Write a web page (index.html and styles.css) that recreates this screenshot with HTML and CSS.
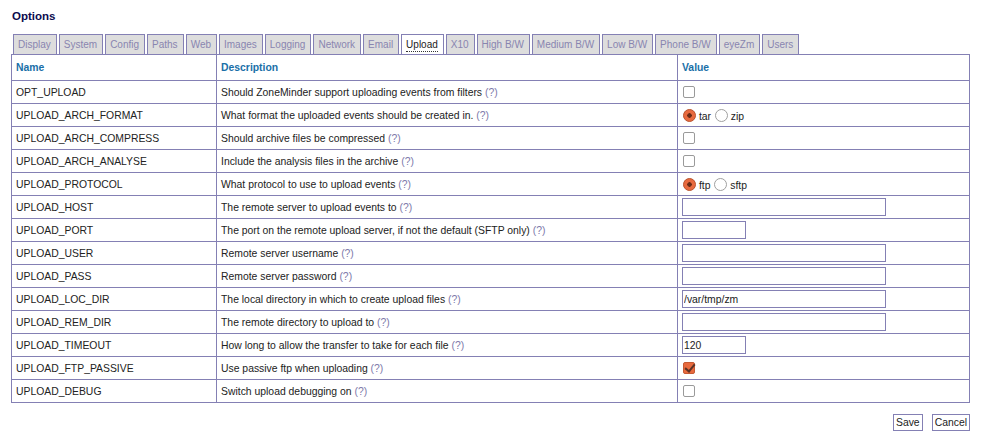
FILE: index.html
```html
<html lang="en">
<head>
    <meta charset="UTF-8">
    <meta name="viewport" content="width=device-width, initial-scale=1.0">
    <title>Options ---- ZoneMinder</title>
    <link rel="stylesheet" href="styles.css">
</head>
<body>
    <div id="page">
        <h2 class="title">Options</h2>
        <ul class="tabs">
            <li>Display</li>
            <li>System</li>
            <li>Config</li>
            <li>Paths</li>
            <li>Web</li>
            <li>Images</li>
            <li>Logging</li>
            <li>Network</li>
            <li>Email</li>
            <li class="active"><span>Upload</span></li>
            <li>X10</li>
            <li>High B/W</li>
            <li>Medium B/W</li>
            <li>Low B/W</li>
            <li>Phone B/W</li>
            <li>eyeZm</li>
            <li>Users</li>
        </ul>
        <form id="form_options">
        <table class="options">
            <thead>
                <tr>
                    <th class="col_name">Name</th>
                    <th class="col_desc">Description</th>
                    <th class="col_value">Value</th>
                </tr>
            </thead>
            <tbody>
                <tr>
                    <td>OPT_UPLOAD</td>
                    <td>Should ZoneMinder support uploading events from filters <a href="#">(?)</a></td>
                    <td><input type="checkbox" class="check"></td>
                </tr>
                <tr>
                    <td>UPLOAD_ARCH_FORMAT</td>
                    <td>What format the uploaded events should be created in. <a href="#">(?)</a></td>
                    <td><input type="radio" class="radio" name="arch" checked> tar <input type="radio" class="radio" name="arch"> zip</td>
                </tr>
                <tr>
                    <td>UPLOAD_ARCH_COMPRESS</td>
                    <td>Should archive files be compressed <a href="#">(?)</a></td>
                    <td><input type="checkbox" class="check"></td>
                </tr>
                <tr>
                    <td>UPLOAD_ARCH_ANALYSE</td>
                    <td>Include the analysis files in the archive <a href="#">(?)</a></td>
                    <td><input type="checkbox" class="check"></td>
                </tr>
                <tr>
                    <td>UPLOAD_PROTOCOL</td>
                    <td>What protocol to use to upload events <a href="#">(?)</a></td>
                    <td><input type="radio" class="radio" name="proto" checked> ftp <input type="radio" class="radio" name="proto"> sftp</td>
                </tr>
                <tr>
                    <td>UPLOAD_HOST</td>
                    <td>The remote server to upload events to <a href="#">(?)</a></td>
                    <td><input class="text wide"></td>
                </tr>
                <tr>
                    <td>UPLOAD_PORT</td>
                    <td>The port on the remote upload server, if not the default (SFTP only) <a href="#">(?)</a></td>
                    <td><input class="text short"></td>
                </tr>
                <tr>
                    <td>UPLOAD_USER</td>
                    <td>Remote server username <a href="#">(?)</a></td>
                    <td><input class="text wide"></td>
                </tr>
                <tr>
                    <td>UPLOAD_PASS</td>
                    <td>Remote server password <a href="#">(?)</a></td>
                    <td><input class="text wide"></td>
                </tr>
                <tr>
                    <td>UPLOAD_LOC_DIR</td>
                    <td>The local directory in which to create upload files <a href="#">(?)</a></td>
                    <td><input class="text wide" value="/var/tmp/zm"></td>
                </tr>
                <tr>
                    <td>UPLOAD_REM_DIR</td>
                    <td>The remote directory to upload to <a href="#">(?)</a></td>
                    <td><input class="text wide"></td>
                </tr>
                <tr>
                    <td>UPLOAD_TIMEOUT</td>
                    <td>How long to allow the transfer to take for each file <a href="#">(?)</a></td>
                    <td><input class="text short" value="120"></td>
                </tr>
                <tr>
                    <td>UPLOAD_FTP_PASSIVE</td>
                    <td>Use passive ftp when uploading <a href="#">(?)</a></td>
                    <td><input type="checkbox" class="check" checked></td>
                </tr>
                <tr>
                    <td>UPLOAD_DEBUG</td>
                    <td>Switch upload debugging on <a href="#">(?)</a></td>
                    <td><input type="checkbox" class="check"></td>
                </tr>
            </tbody>
        </table>
        <div id="buttons">
            <button type="button">Save</button>
            <button type="button">Cancel</button>
        </div>
        </form>
    </div>
</body>
</html>
```

FILE: styles.css
```css
body{
    margin: 0;
    background: #ffffff;
    font-family: 'Liberation Sans', Arial, sans-serif;
    color: #222222;
}
#page{
    padding: 9px 15px 0 11px;
}
.title{
    margin: 0 0 11px 1px;
    font-size: 11.5px;
    font-weight: bold;
    color: #0b0b4e;
    line-height: 14px;
}
.tabs{
    list-style: none;
    margin: 0 0 0 2px;
    padding: 0;
    display: flex;
    gap: 2px;
    height: 20px;
}
.tabs li{
    box-sizing: border-box;
    height: 20px;
    padding: 0 5px 0 4px;
    border: 1px solid #8480b4;
    border-bottom: none;
    background: #dddddd;
    color: #8985b0;
    font-size: 10px;
    line-height: 19px;
}
.tabs li.active{
    background: #ffffff;
    color: #222222;
}
.tabs li.active span{
    border-bottom: 1px dotted #333333;
    padding-bottom: 1px;
}
.options{
    width: 959px;
    border-collapse: collapse;
    border: 1px solid #8480b4;
    font-size: 10.4px;
}
.options th, .options td{
    border: 1px solid #8480b4;
    text-align: left;
    padding: 0 4px;
    height: 23px;
    white-space: nowrap;
}
.options th{
    height: 26px;
    color: #1a6fa8;
    font-weight: bold;
}
.col_name{
    width: 196px;
}
.col_desc{
    width: 452px;
}
a{
    color: #7d79aa;
    text-decoration: none;
}
.check{
    appearance: none;
    -webkit-appearance: none;
    box-sizing: border-box;
    width: 12px;
    height: 12px;
    margin: 0 0 0 1px;
    border: 1px solid #9a9a9a;
    border-radius: 2px;
    background: #ffffff;
    vertical-align: middle;
    position: relative;
}
.check:checked{
    background: #e86a3e;
    border-color: #c55a34;
}
.check:checked::after{
    content: "";
    position: absolute;
    left: 3px;
    top: -1px;
    width: 4px;
    height: 8px;
    border: solid #5b3226;
    border-width: 0 2px 2px 0;
    transform: rotate(40deg);
}
.radio{
    appearance: none;
    -webkit-appearance: none;
    box-sizing: border-box;
    width: 13px;
    height: 13px;
    margin: 0 0 0 1px;
    border: 1px solid #a0a0a0;
    border-radius: 50%;
    background: #ffffff;
    vertical-align: -2px;
}
.radio:checked{
    background: radial-gradient(circle, #6b2c17 0 2px, #e86a3e 2.5px);
    border-color: #b9532f;
}
.text{
    box-sizing: border-box;
    height: 18px;
    border: 1px solid #8480b4;
    margin: 0;
    padding: 0 1px;
    font-family: 'Liberation Sans', Arial, sans-serif;
    font-size: 10.4px;
    color: #222222;
    outline: none;
    vertical-align: middle;
}
.wide{
    width: 204px;
}
.short{
    width: 64px;
}
#buttons{
    display: flex;
    justify-content: flex-end;
    gap: 9px;
    margin-top: 11px;
}
button{
    cursor: pointer;
    height: 17px;
    padding: 0 2px;
    border: 1px solid #8480b4;
    background: #ffffff;
    color: #222222;
    font-family: 'Liberation Sans', Arial, sans-serif;
    font-size: 10.4px;
}
```
